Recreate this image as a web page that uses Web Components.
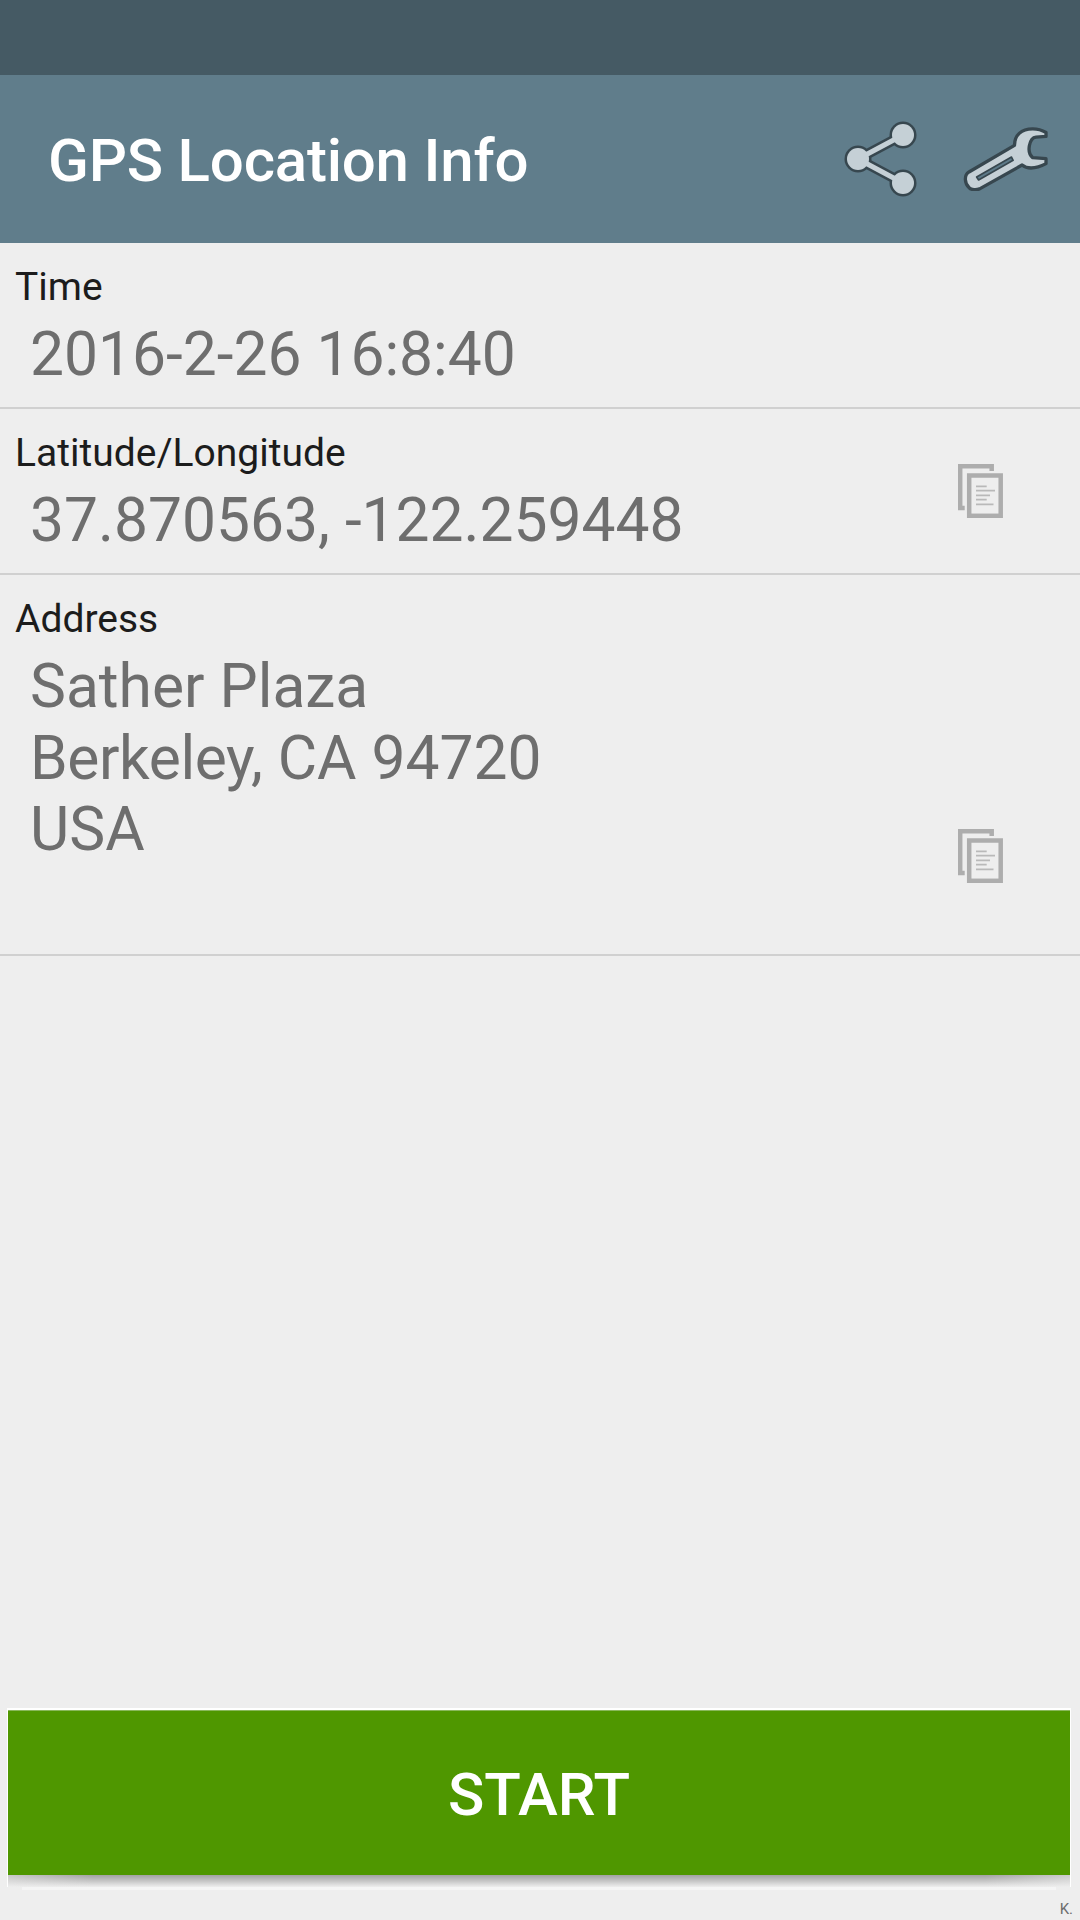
<!DOCTYPE html>
<html>
<head>
<meta charset="utf-8">
<title>GPS Location Info</title>
<style>
  html, body { margin: 0; height: 100%; }
  body { background: #eeeeee; font-family: Roboto, "Liberation Sans", sans-serif; }
  gps-screen { height: 1920px; }
  .tight { letter-spacing: -0.4px; }
</style>
</head>
<body>
<template id="copy-icon">
  <svg width="45" height="54" viewBox="0 0 45 54" fill="none" style="display:block">
    <path d="M33.700 7V2.200H2.200V44H6.700" stroke="#adadad" stroke-width="4.500"/>
    <rect x="11.200" y="11.500" width="31.500" height="40.300" stroke="#adadad" stroke-width="4.500"/>
    <path d="M18 22.300H28.700M18 26.700H37M18 31.300H32M18 35.700H28.700M18 40.300H35.500" stroke="#b9b9b9" stroke-width="1.700"/>
  </svg>
</template>

<gps-screen>
  <info-row label="Time" style="--row-height:164px">2016-2-26 16:8:40</info-row>
  <info-row label="Latitude/Longitude" copy style="--row-height:164px">37.870563, -122.259448</info-row>
  <info-row label="Address" copy style="--row-height:379px;--icon-top:254px">Sather Plaza<br><span class="tight">Berkeley,</span> CA 94720<br>USA</info-row>
</gps-screen>

<script>
class AppBar extends HTMLElement {
  constructor() {
    super();
    this.attachShadow({ mode: "open" }).innerHTML = `
      <style>
        :host { display: block; flex: none; }
        .status { height: 75px; background: #455a64; }
        .bar {
          height: 168px;
          background: #607d8b;
          display: flex;
          align-items: center;
          padding-left: 48px;
          box-sizing: border-box;
        }
        h1 {
          flex: 1;
          margin: 2px 0 0;
          color: #fff;
          font: 500 60px Roboto, sans-serif;
          letter-spacing: -0.2px;
        }
        svg { display: block; }
        .share { margin-right: 45px; }
        .tools { margin-right: 32px; }
      </style>
      <div class="status"></div>
      <div class="bar">
        <h1>GPS Location Info</h1>
        <svg class="share" width="74" height="76" viewBox="0 0 74 76">
          <g stroke="#37474f" stroke-width="10" fill="none">
            <path d="M14 38L59 14M14 38L59 62"/>
          </g>
          <g fill="#37474f">
            <circle cx="14" cy="38" r="13.500"/><circle cx="59" cy="14" r="13.500"/><circle cx="59" cy="62" r="13.500"/>
          </g>
          <g stroke="#c5d0d6" stroke-width="5" fill="none">
            <path d="M14 38L59 14M14 38L59 62"/>
          </g>
          <g fill="#c5d0d6">
            <circle cx="14" cy="38" r="11"/><circle cx="59" cy="14" r="11"/><circle cx="59" cy="62" r="11"/>
          </g>
        </svg>
        <svg class="tools" width="85" height="64" viewBox="430 80 256 192">
          <path d="M448 215L585 135C585 105 605 85 640 85C655 85 670 90 680 96V108L650 110C630 112 620 155 640 172L680 175V190C665 198 650 203 635 203C625 203 615 200 608 194L480 266C470 270 455 270 448 262C435 250 432 225 448 215Z"
            fill="#c5d0d6" stroke="#37474f" stroke-width="10" stroke-linejoin="round"/>
          <path d="M471 230L576 170L581 180L477 239Z" fill="#5d7a89" stroke="#37474f" stroke-width="5" stroke-linejoin="round"/>
        </svg>
      </div>
    `;
  }
}

class InfoRow extends HTMLElement {
  constructor() {
    super();
    this.attachShadow({ mode: "open" }).innerHTML = `
      <style>
        :host {
          display: block;
          height: var(--row-height);
          border-bottom: 2px solid #d0d0d0;
          position: relative;
        }
        .label {
          padding: 21px 0 0 15px;
          font-size: 39px;
          line-height: 46px;
          color: #1c1c1c;
        }
        .value {
          padding: 9px 0 0 30px;
          font-size: 60.500px;
          line-height: 71.500px;
          color: #6e6e6e;
        }
        .copy {
          position: absolute;
          left: 958px;
          top: var(--icon-top, 55px);
        }
      </style>
      <div class="label"></div>
      <div class="value"><slot></slot></div>
    `;
    this.shadowRoot.querySelector(".label").textContent = this.getAttribute("label");
    if (this.hasAttribute("copy")) {
      const holder = document.createElement("div");
      holder.className = "copy";
      holder.append(document.getElementById("copy-icon").content.cloneNode(true));
      this.shadowRoot.append(holder);
    }
  }
}

class StartButton extends HTMLElement {
  constructor() {
    super();
    this.attachShadow({ mode: "open" }).innerHTML = `
      <style>
        :host { display: block; flex: none; margin: 0 10px 0 8px; position: relative; }
        .frame {
          border-top: 2px solid #fff;
          border-left: 1px solid #fff;
          border-right: 1px solid #fff;
          margin: 0 -1px;
        }
        button {
          display: block;
          width: 100%;
          height: 165px;
          border: 0;
          padding: 3px 0 0;
          background: #4f9700;
          border-top: 1px solid #8ab85c;
          color: #fff;
          font: 500 60px Roboto, sans-serif;
        }
        /* soft drop under the button, fading out towards both ends */
        .drop {
          height: 12px;
          background:
            linear-gradient(to right, rgba(238,238,238,.5), rgba(238,238,238,0) 8%, rgba(238,238,238,0) 92%, rgba(238,238,238,.55)),
            linear-gradient(#a2a2a2, #c6c6c6 50%, #eeeeee);
        }
        .foot {
          height: 3px;
          margin-left: 14px;
          margin-right: 14px;
          background: #f5f5f5;
        }
      </style>
      <div class="frame">
        <button><slot></slot></button>
        <div class="drop"></div>
      </div>
      <div class="foot"></div>
    `;
  }
}

class GpsScreen extends HTMLElement {
  constructor() {
    super();
    this.attachShadow({ mode: "open" }).innerHTML = `
      <style>
        :host {
          display: flex;
          flex-direction: column;
          height: 1920px;
          overflow: hidden;
          position: relative;
        }
        .rows { height: 1465px; flex: none; }
        .watermark {
          position: absolute;
          right: 7px;
          bottom: 2px;
          font-size: 15px;
          line-height: 18px;
          color: #6d6d6d;
        }
      </style>
      <app-bar></app-bar>
      <div class="rows"><slot></slot></div>
      <start-button>START</start-button>
      <span class="watermark">K.</span>
    `;
  }
}

customElements.define("app-bar", AppBar);
customElements.define("info-row", InfoRow);
customElements.define("start-button", StartButton);
customElements.define("gps-screen", GpsScreen);
</script>
</body>
</html>
